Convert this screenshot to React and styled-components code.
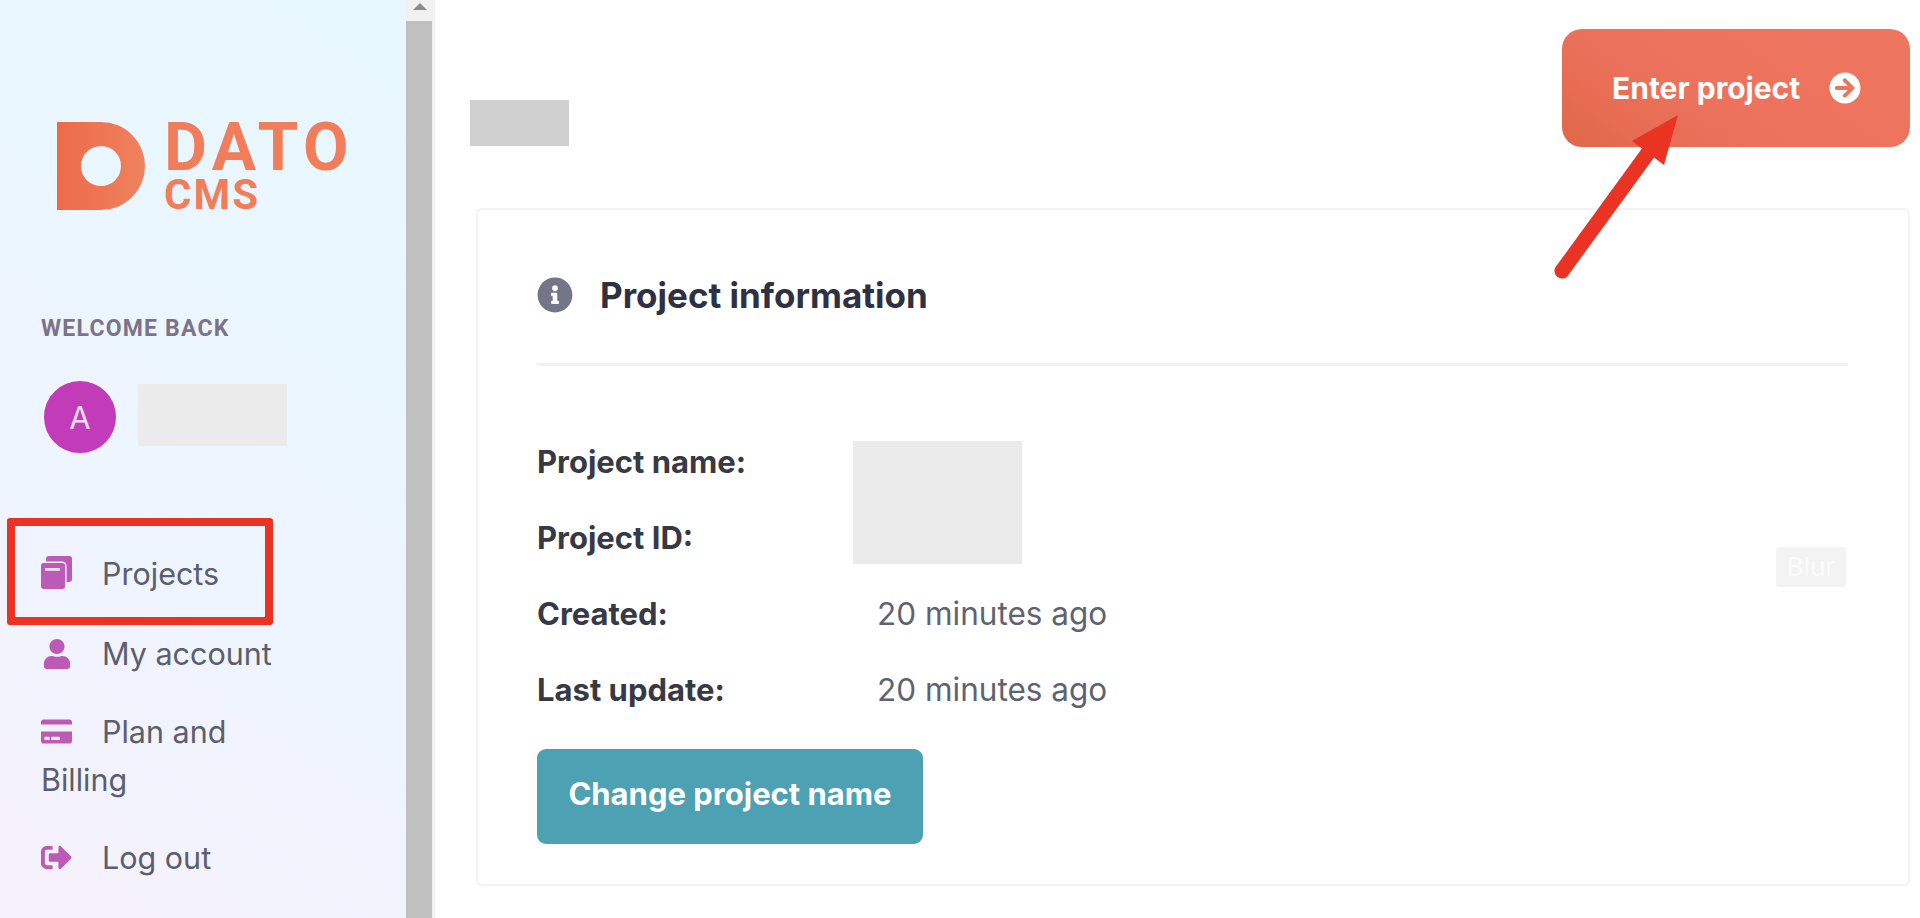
import styled, { createGlobalStyle } from "styled-components";
import { FaUser, FaCreditCard, FaSignOutAlt, FaInfoCircle, FaArrowCircleRight } from "react-icons/fa";

const GlobalStyle = createGlobalStyle`
  html, body {
    margin: 0;
    padding: 0;
    height: 100%;
    overflow: hidden;
    background: #ffffff;
  }
  * {
    box-sizing: border-box;
  }
`;

const Page = styled.div`
  position: relative;
  display: flex;
  width: 1920px;
  height: 918px;
  overflow: hidden;
  font-family: Inter, "Liberation Sans", sans-serif;
`;

const Sidebar = styled.aside`
  position: relative;
  width: 405px;
  flex-shrink: 0;
  padding: 122px 60px 0 41px;
  background: linear-gradient(215deg, #e7f8ff 0%, #edf5ff 55%, #f6f1fc 100%);
`;

const Logo = styled.div`
  display: flex;
  gap: 19px;
  margin-left: 16px;
  color: #f27d5a;
  font-family: Roboto, "Liberation Sans", sans-serif;
`;

const LogoMark = styled.svg`
  flex-shrink: 0;
`;

const LogoWords = styled.div`
  display: flex;
  flex-direction: column;
  gap: 8px;
  padding-top: 2px;
  font-weight: 700;
`;

const LogoDato = styled.span`
  font-size: 66px;
  line-height: 48px;
  letter-spacing: 5.5px;
`;

const LogoCms = styled.span`
  font-size: 42px;
  line-height: 30px;
  letter-spacing: 2px;
`;

const Welcome = styled.div`
  margin-top: 107px;
  font-family: Roboto, "Liberation Sans", sans-serif;
  font-size: 23px;
  line-height: 24px;
  font-weight: 700;
  color: #7c7387;
  letter-spacing: 1.2px;
`;

const UserRow = styled.div`
  display: flex;
  align-items: center;
  gap: 20px;
  margin: 38px 0 0 1px;
`;

const Avatar = styled.div`
  display: flex;
  align-items: center;
  justify-content: center;
  flex-shrink: 0;
  width: 76px;
  height: 76px;
  border-radius: 50%;
  border: 2px solid #f8f4fc;
  background: #c23cb9;
  color: #f6dcf3;
  font-size: 31px;
`;

const UserName = styled.div`
  width: 149px;
  height: 62px;
  margin-top: -4px;
  background: #ebebeb;
`;

const Nav = styled.nav`
  margin-top: 95px;
  max-width: 275px;
`;

const NavItem = styled.div`
  margin-bottom: 30px;
  font-size: 30.5px;
  line-height: 48px;
  color: #5b5e6d;

  &:first-child {
    margin-bottom: 32px;
  }
`;

const NavIcon = styled.span`
  display: inline-block;
  width: 31px;
  margin-right: 30px;
  color: #bd5ab8;
  font-size: 31px;
  line-height: 1;
  vertical-align: -4px;

  svg {
    display: block;
    margin: 0 auto;
  }
`;

const HighlightBox = styled.div`
  position: absolute;
  left: 7px;
  top: 518px;
  width: 266px;
  height: 107px;
  border: 8px solid #ea3323;
  border-radius: 3px;
`;

const Scrollbar = styled.div`
  display: flex;
  flex-direction: column;
  width: 30px;
  flex-shrink: 0;
  background: #f1f1f1;
`;

const ScrollUp = styled.div`
  display: flex;
  justify-content: center;
  padding-top: 3px;
  height: 21px;

  &::before {
    content: "";
    border-left: 7px solid transparent;
    border-right: 7px solid transparent;
    border-bottom: 7px solid #8c8c8c;
    height: 0;
  }
`;

const ScrollThumb = styled.div`
  flex: 1;
  margin: 0 3px 0 1px;
  background: #c0c0c0;
`;

const Main = styled.main`
  position: relative;
  flex: 1;
  padding: 29px 10px 0 35px;
`;

const Header = styled.div`
  display: flex;
  justify-content: space-between;
  align-items: flex-start;
`;

const PageTitle = styled.div`
  width: 99px;
  height: 46px;
  margin-top: 71px;
  background: #d0d0d0;
`;

const EnterButton = styled.button`
  display: flex;
  align-items: center;
  gap: 29px;
  width: 348px;
  height: 118px;
  padding: 0 0 0 50px;
  border: none;
  border-radius: 20px;
  background: linear-gradient(35deg, #e1674a 0%, #ed725c 40%, #ee765f 100%);
  color: #ffffff;
  font: 700 30px Inter, "Liberation Sans", sans-serif;
`;

const Card = styled.section`
  position: relative;
  margin: 61px 0 0 6px;
  height: 678px;
  padding: 0 60px 0 59px;
  border: 2px solid #f3f3f3;
  border-radius: 6px;
  background: #ffffff;
`;

const CardHead = styled.div`
  display: flex;
  align-items: center;
  gap: 27px;
  height: 156px;
  padding-top: 17px;
  border-bottom: 3px solid #f0f1f2;
  color: #2f3142;
`;

const InfoIcon = styled.span`
  display: flex;
  color: #737689;
  font-size: 36px;
`;

const CardTitle = styled.h2`
  margin: 0;
  font-size: 35px;
  font-weight: 700;
`;

const Details = styled.div`
  position: relative;
  margin-top: 59px;
`;

const DetailRow = styled.div`
  display: grid;
  grid-template-columns: 340px 1fr;
  height: 76px;
  line-height: 74px;
`;

const DetailLabel = styled.span`
  font-size: 31px;
  font-weight: 700;
  color: #373945;
`;

const DetailValue = styled.span`
  font-size: 31.5px;
  color: #5f6270;
`;

const HiddenValue = styled.div`
  position: absolute;
  left: 316px;
  top: 16px;
  width: 169px;
  height: 123px;
  background: #ebebeb;
`;

const ChangeButton = styled.button`
  display: block;
  width: 386px;
  height: 95px;
  margin-top: 20px;
  padding: 0 0 6px;
  border: none;
  border-radius: 9px;
  background: #4ca1b2;
  color: #ffffff;
  font: 700 31px Inter, "Liberation Sans", sans-serif;
`;

const BlurTag = styled.span`
  position: absolute;
  left: 1298px;
  top: 337px;
  width: 70px;
  height: 40px;
  border-radius: 3px;
  background: #f3f3f3;
  color: #fbfbfb;
  font-size: 26px;
  line-height: 40px;
  text-align: center;
`;

const Arrow = styled.svg`
  position: absolute;
  left: 1540px;
  top: 100px;
  pointer-events: none;
`;

function ProjectsIcon() {
  return (
    <svg width="31" height="33" viewBox="0 0 31 33">
      <rect x="5" y="0" width="26" height="26" rx="3" fill="#bd5ab8" />
      <rect x="-0.8" y="6.200" width="25.600" height="27.600" rx="3.500" fill="#bd5ab8" stroke="#eef3ff" strokeWidth="1.600" />
      <rect x="4" y="12" width="15" height="2.800" fill="#efe3f5" />
    </svg>
  );
}

const navLinks = [
  { label: "Projects", icon: <ProjectsIcon /> },
  { label: "My account", icon: <FaUser size={30} /> },
  { label: "Plan and Billing", icon: <FaCreditCard size={31} /> },
  { label: "Log out", icon: <FaSignOutAlt size={31} /> },
];

const details = [
  { label: "Project name:" },
  { label: "Project ID:" },
  { label: "Created:", value: "20 minutes ago" },
  { label: "Last update:", value: "20 minutes ago" },
];

export default function App() {
  return (
    <Page>
      <GlobalStyle />
      <Sidebar>
        <Logo>
          <LogoMark width="88" height="88" viewBox="0 0 88 88">
            <defs>
              <linearGradient id="logoFill" x1="0" y1="0" x2="1" y2="0">
                <stop offset="0" stopColor="#ee6a49" />
                <stop offset="1" stopColor="#f0825f" />
              </linearGradient>
            </defs>
            <path
              fill="url(#logoFill)"
              fillRule="evenodd"
              d="M0 0H44A44 44 0 0 1 44 88H0ZM44 24A20 20 0 1 0 44 64A20 20 0 1 0 44 24Z"
            />
          </LogoMark>
          <LogoWords>
            <LogoDato>DATO</LogoDato>
            <LogoCms>CMS</LogoCms>
          </LogoWords>
        </Logo>
        <Welcome>WELCOME BACK</Welcome>
        <UserRow>
          <Avatar>A</Avatar>
          <UserName />
        </UserRow>
        <Nav>
          {navLinks.map((link) => (
            <NavItem key={link.label}>
              <NavIcon>{link.icon}</NavIcon>
              {link.label}
            </NavItem>
          ))}
        </Nav>
        <HighlightBox />
      </Sidebar>
      <Scrollbar>
        <ScrollUp />
        <ScrollThumb />
      </Scrollbar>
      <Main>
        <Header>
          <PageTitle />
          <EnterButton>
            Enter project
            <FaArrowCircleRight size={32} />
          </EnterButton>
        </Header>
        <Card>
          <CardHead>
            <InfoIcon>
              <FaInfoCircle />
            </InfoIcon>
            <CardTitle>Project information</CardTitle>
          </CardHead>
          <Details>
            {details.map((row) => (
              <DetailRow key={row.label}>
                <DetailLabel>{row.label}</DetailLabel>
                <DetailValue>{row.value}</DetailValue>
              </DetailRow>
            ))}
            <HiddenValue />
          </Details>
          <ChangeButton>Change project name</ChangeButton>
          <BlurTag>Blur</BlurTag>
        </Card>
      </Main>
      <Arrow width="150" height="180" viewBox="0 0 150 180">
        <path d="M22 171L108 53" stroke="#ea3323" strokeWidth="15" strokeLinecap="round" fill="none" />
        <path d="M138 15L92 41L124 65Z" fill="#ea3323" />
      </Arrow>
    </Page>
  );
}
